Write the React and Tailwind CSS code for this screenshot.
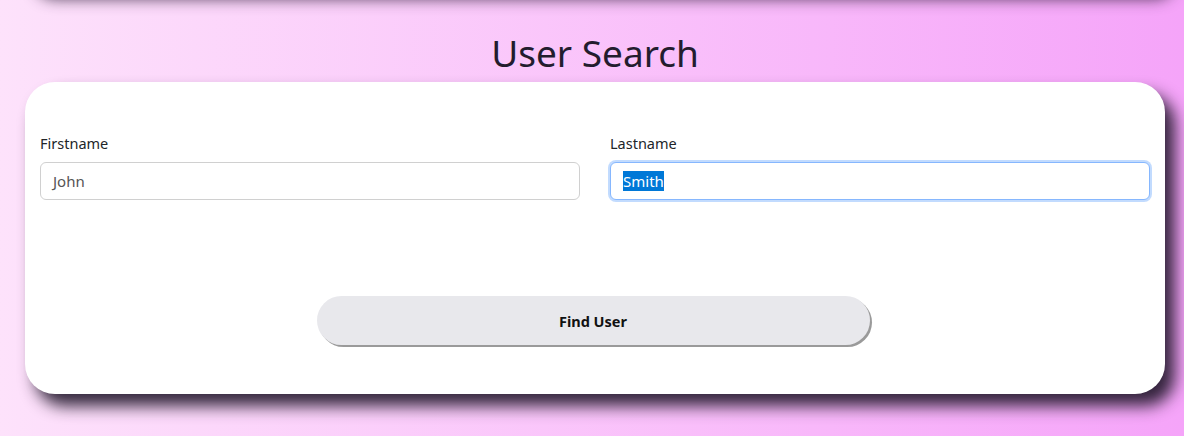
export default function App() {
  return (
    <div
      className="h-[436px] overflow-hidden bg-gradient-to-r from-[#fde2fb] to-[#f5a4f9] text-[#212529]"
      style={{ fontFamily: '"Noto Sans", "Open Sans", sans-serif' }}
    >
      <div className="ml-[25px] mr-[19px]">
        {/* bottom edge of the card above */}
        <div className="-mt-[52px] h-[40px] rounded-[30px] bg-white shadow-[10px_10px_15px_rgba(40,25,50,0.85)]" />

        <h1 className="mt-[41px] text-center text-[37px] leading-[48px] text-[#231c2e]">User Search</h1>

        <div className="mt-[5px] h-[312px] rounded-[30px] bg-white px-[15px] pt-[51px] shadow-[10px_12px_16px_rgba(35,25,45,0.92)]">
          <div className="grid grid-cols-2 gap-[30px]">
            <div>
              <div className="mb-[8px] text-[14.5px] leading-[21px]">Firstname</div>
              <div className="flex h-[38px] items-center rounded-[6px] border border-[#d0d0d0] bg-white px-[12px] text-[15px] text-[#555]">
                John
              </div>
            </div>
            <div>
              <div className="mb-[8px] text-[14.5px] leading-[21px]">Lastname</div>
              <div className="flex h-[38px] items-center rounded-[6px] border border-[#86b7fe] bg-white px-[12px] text-[15px] shadow-[0_0_0_2px_rgba(13,110,253,0.25)]">
                <span className="bg-[#0078d7] leading-[20px] text-white">Smith</span>
              </div>
            </div>
          </div>

          <div className="mt-[96px] flex justify-center pr-[4px]">
            <button className="h-[49px] w-[553px] rounded-full bg-[#e8e8ec] pt-[2px] text-[14.5px] font-bold text-[#111] shadow-[2px_2px_0_#9a9a9a]">
              Find User
            </button>
          </div>
        </div>
      </div>
    </div>
  )
}
